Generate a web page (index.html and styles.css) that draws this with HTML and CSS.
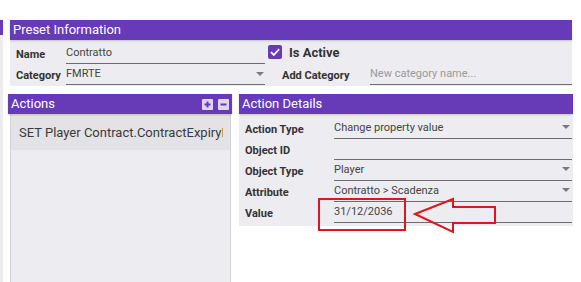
FILE: index.html
```html
<!DOCTYPE html>
<html>
<head>
<meta charset="utf-8">
<link rel="stylesheet" href="styles.css">
</head>
<body>
<div class="page">
  <div class="stub"><div class="stub-head"></div><div class="stub-body"></div></div>
  <div class="main">
    <section class="preset">
      <header class="panel-head">Preset Information</header>
      <div class="panel-body preset-body">
        <div class="row">
          <label class="lbl lbl-preset">Name</label>
          <div class="field field-preset"><span class="val">Contratto</span></div>
          <span class="check"><svg width="14" height="14" viewBox="0 0 14 14"><path d="M3 7.2 L5.8 10 L11.2 4.2" fill="none" stroke="#fff" stroke-width="1.8"/></svg></span>
          <span class="active-lbl">Is Active</span>
        </div>
        <div class="row">
          <label class="lbl lbl-preset">Category</label>
          <div class="field field-preset select"><span class="val">FMRTE</span><span class="caret"></span></div>
          <label class="lbl lbl-add">Add Category</label>
          <div class="field field-grow"><span class="ph">New category name...</span></div>
        </div>
      </div>
    </section>
    <div class="lower">
      <section class="actions">
        <header class="panel-head head-actions">
          <span>Actions</span>
          <span class="btns">
            <span class="btn"><svg width="11" height="11" viewBox="0 0 11 11"><path d="M5.5 2.5 V8.5 M2.5 5.5 H8.5" stroke="#673ab7" stroke-width="2"/></svg></span>
            <span class="btn"><svg width="11" height="11" viewBox="0 0 11 11"><path d="M2.5 5.5 H8.5" stroke="#673ab7" stroke-width="2"/></svg></span>
          </span>
        </header>
        <div class="actions-body">
          <div class="item"><span class="item-text">SET Player Contract.ContractExpiryD</span></div>
        </div>
      </section>
      <section class="details">
        <header class="panel-head">Action Details</header>
        <div class="panel-body details-body">
          <div class="row">
            <label class="lbl lbl-detail">Action Type</label>
            <div class="field field-grow select"><span class="val">Change property value</span><span class="caret caret-d"></span></div>
          </div>
          <div class="row">
            <label class="lbl lbl-detail">Object ID</label>
            <div class="field field-grow"></div>
          </div>
          <div class="row">
            <label class="lbl lbl-detail">Object Type</label>
            <div class="field field-grow select"><span class="val">Player</span><span class="caret caret-d"></span></div>
          </div>
          <div class="row">
            <label class="lbl lbl-detail">Attribute</label>
            <div class="field field-grow select"><span class="val">Contratto &gt; Scadenza</span><span class="caret caret-d"></span></div>
          </div>
          <div class="row">
            <label class="lbl lbl-detail">Value</label>
            <div class="field field-grow"><span class="val">31/12/2036</span></div>
          </div>
        </div>
      </section>
    </div>
  </div>
  <svg class="annot" width="581" height="282" viewBox="0 0 581 282">
    <rect x="319" y="199" width="86" height="31" fill="none" stroke="#e0161d" stroke-width="2"/>
    <polygon points="415,214 453,199 453,207 495,207 495,223 453,223 453,232" fill="none" stroke="#e0161d" stroke-width="2" stroke-linejoin="miter"/>
  </svg>
</div>
</body>
</html>
```
FILE: styles.css
```css
html, body {
  margin: 0;
  padding: 0;
  overflow: hidden;
  background: #fff;
}
body {
  font-family: Roboto, "Liberation Sans", sans-serif;
  color: #333;
}
.page {
  position: relative;
  display: flex;
  width: 581px;
  height: 282px;
  overflow: hidden;
}
.stub {
  width: 3px;
  margin-top: 20px;
  display: flex;
  flex-direction: column;
}
.stub-head {
  height: 15px;
  background: #673ab7;
}
.stub-body {
  flex: 1;
  background: #ececef;
}
.main {
  margin-left: 5px;
  padding-top: 20px;
  display: flex;
  flex-direction: column;
}
.preset {
  margin-left: 2px;
  width: 562px;
}
.panel-head {
  height: 20px;
  line-height: 20px;
  background: #673ab7;
  color: #fff;
  font-size: 13px;
  padding-left: 3px;
  box-shadow: 0 1px 2px rgba(0,0,0,0.18);
  position: relative;
}
.panel-body {
  background: #edecf0;
}
.preset-body {
  padding: 3px 0 1px 6px;
}
.row {
  display: flex;
  align-items: flex-start;
  height: 21px;
}
.lbl {
  font-size: 11px;
  font-weight: 700;
  color: #333;
  line-height: 19px;
  padding-top: 2px;
  white-space: nowrap;
}
.lbl-preset { width: 50px; }
.lbl-add { margin-left: 17px; width: 88px; }
.lbl-detail { width: 89px; }
.field {
  position: relative;
  box-sizing: border-box;
  height: 21px;
  border-bottom: 1px solid #6d6d6d;
  font-size: 11px;
  line-height: 19px;
  color: #444;
  white-space: nowrap;
}
.field-preset { width: 199px; }
.field-grow { flex: 1; }
.ph { color: #9a9a9a; }
.caret {
  position: absolute;
  right: 1px;
  top: 8px;
  width: 0;
  height: 0;
  border-left: 4px solid transparent;
  border-right: 4px solid transparent;
  border-top: 4px solid #7a7a7a;
}
.caret-d { right: 2px; top: 7px; }
.check {
  margin-top: 2px;
  margin-left: 3px;
  width: 14px;
  height: 14px;
  border-radius: 2px;
  background: #673ab7;
  display: flex;
}
.active-lbl {
  margin-left: 7px;
  font-size: 13px;
  font-weight: 700;
  color: #333;
  line-height: 19px;
}
.lower {
  margin-top: 8px;
  display: flex;
  align-items: flex-start;
}
.actions {
  width: 224px;
}
.head-actions {
  display: flex;
  justify-content: space-between;
  align-items: center;
}
.btns {
  display: flex;
  gap: 5px;
  margin-right: 3px;
}
.btn {
  width: 11px;
  height: 11px;
  background: #ded6ef;
  border-radius: 1px;
  display: flex;
}
.actions-body {
  margin: 0 1px 0 2px;
  height: 172px;
  background: #edecf0;
  border-left: 1px solid #d2d1d6;
  border-right: 1px solid #d2d1d6;
}
.item {
  height: 36px;
  line-height: 37px;
  background: #e3e2e6;
  font-size: 13px;
  color: #3a3a3a;
  padding: 0 0 0 8px;
}
.item-text {
  display: block;
  margin-right: 7px;
  white-space: nowrap;
  overflow: hidden;
}
.details {
  margin-left: 7px;
  width: 334px;
}
.details-body {
  padding: 4px 1px 3px 6px;
}
.annot {
  position: absolute;
  left: 0;
  top: 0;
  pointer-events: none;
}
```
